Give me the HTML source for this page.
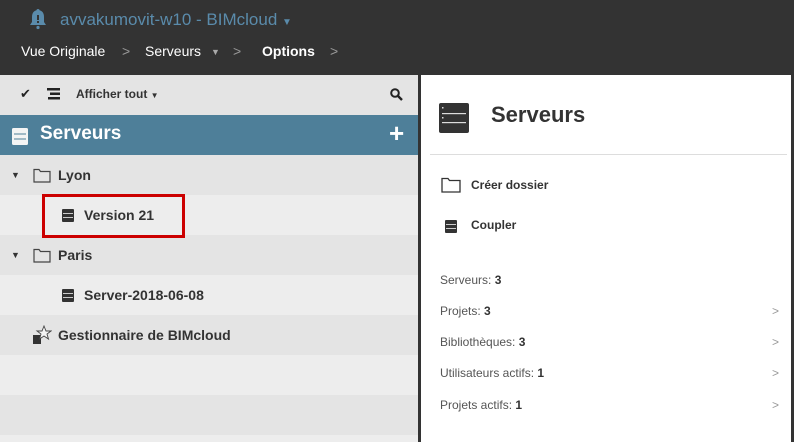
<!DOCTYPE html>
<html style="width:794px;height:442px;overflow:hidden"><head><meta charset="utf-8"><style>
*{margin:0;padding:0;box-sizing:border-box}
body{width:794px;height:442px;overflow:hidden;background:#333;font-family:"Liberation Sans",sans-serif;position:relative}
.a{position:absolute}
.top{left:0;top:0;width:794px;height:75px;background:#333}
.left{left:0;top:75px;width:418px;height:367px;background:#ececec;overflow:hidden}
.right{left:421px;top:75px;width:370px;height:367px;background:#fff}
.row{position:absolute;left:0;width:418px;height:40px;font-size:14px;font-weight:bold;color:#333;line-height:40px}
.sv{display:inline-block;width:12px;height:13px;background:#333;border-radius:1px;position:absolute;top:14px}
.sv:before,.sv:after{content:"";position:absolute;left:1px;right:1px;height:1px;background:#ccc}
.sv:before{top:4px}.sv:after{top:8px}
.stat{position:absolute;left:440px;font-size:12px;color:#555}
.stat b{color:#333}
.chev{position:absolute;left:772px;font-size:12px;color:#999}
.bc{position:absolute;top:43px;font-size:14px;color:#fff;white-space:nowrap}
.gt{position:absolute;top:43px;font-size:14px;color:#999}
</style></head><body>
<div class="a top"></div>
<svg class="a" style="left:28px;top:8px" width="20" height="22" viewBox="0 0 20 22"><path d="M10 1c1 0 1.5.6 1.5 1.3C14.5 3 16 5.5 16 9v5l2 3H2l2-3V9c0-3.5 1.5-6 4.5-6.7C8.5 1.6 9 1 10 1z" fill="#5a8bab"/><rect x="9" y="7" width="2" height="5" fill="#333"/><rect x="9" y="13" width="2" height="2" fill="#333"/><circle cx="10" cy="19.5" r="1.6" fill="#5a8bab"/></svg>
<div class="a" style="left:60px;top:10px;font-size:17px;color:#5a8bab">avvakumovit-w10 - BIMcloud <span style="font-size:10px">▼</span></div>
<div class="bc" style="left:21px">Vue Originale</div>
<div class="gt" style="left:122px">&gt;</div>
<div class="bc" style="left:145px">Serveurs</div>
<div class="a" style="left:211px;top:47px;font-size:9px;color:#aaa">▼</div>
<div class="gt" style="left:233px">&gt;</div>
<div class="bc" style="left:262px;font-weight:bold">Options</div>
<div class="gt" style="left:330px">&gt;</div>
<div class="a left"></div>
<div class="a" style="left:0;top:75px;width:418px;height:40px;background:#e4e4e4"></div>
<div class="a" style="left:20px;top:86px;font-size:13px;color:#222">✔</div>
<svg class="a" style="left:47px;top:88px" width="13" height="12"><rect x="0" y="0" width="13" height="2.5" fill="#222"/><rect x="3" y="4.5" width="10" height="2.5" fill="#222"/><rect x="1" y="9" width="12" height="2.5" fill="#222"/></svg>
<div class="a" style="left:76px;top:87px;font-size:12px;font-weight:bold;color:#333">Afficher tout <span style="font-size:8px">▼</span></div>
<svg class="a" style="left:390px;top:88px" width="13" height="13"><circle cx="5" cy="5" r="3.8" fill="none" stroke="#222" stroke-width="2"/><path d="M8 8l4 4" stroke="#222" stroke-width="2.4"/></svg>
<div class="a" style="left:0;top:115px;width:418px;height:40px;background:#4e7f99"></div>
<svg class="a" style="left:12px;top:128px" width="16" height="17"><rect width="16" height="17" rx="1.5" fill="#f4f4f4"/><rect x="2" y="5.5" width="12" height="1" fill="#4e7f99"/><rect x="2" y="10.5" width="12" height="1" fill="#4e7f99"/></svg>
<div class="a" style="left:40px;top:123px;font-size:19px;font-weight:bold;color:#fff">Serveurs</div>
<div class="a" style="left:389px;top:118px;font-size:26px;font-weight:bold;color:#fff">+</div>
<div class="row" style="top:155px;background:#e4e4e4"><span style="position:absolute;left:11px;font-size:9px">▼</span><svg style="position:absolute;left:33px;top:13px" width="18" height="15"><path d="M1 1.5h5l1.5 2H17v10.5H1z" fill="none" stroke="#444" stroke-width="1.2"/></svg><span style="position:absolute;left:58px">Lyon</span></div>
<div class="row" style="top:195px;background:#ededed"><span class="sv" style="left:62px"></span><span style="position:absolute;left:84px">Version 21</span></div>
<div class="row" style="top:235px;background:#e4e4e4"><span style="position:absolute;left:11px;font-size:9px">▼</span><svg style="position:absolute;left:33px;top:13px" width="18" height="15"><path d="M1 1.5h5l1.5 2H17v10.5H1z" fill="none" stroke="#444" stroke-width="1.2"/></svg><span style="position:absolute;left:58px">Paris</span></div>
<div class="row" style="top:275px;background:#ededed"><span class="sv" style="left:62px"></span><span style="position:absolute;left:84px">Server-2018-06-08</span></div>
<div class="row" style="top:315px;background:#e4e4e4"><svg style="position:absolute;left:32px;top:10px" width="20" height="20"><path d="M1 10h8v9H1z" fill="#333"/><path d="M12 1l2 5h5l-4 3 1.5 5-4.5-3-4.5 3 1.5-5-4-3h5z" fill="#f4f4f4" stroke="#444" stroke-width="0.9"/></svg><span style="position:absolute;left:58px">Gestionnaire de BIMcloud</span></div>
<div class="row" style="top:355px;background:#ededed"></div>
<div class="row" style="top:395px;height:40px;background:#e4e4e4"></div>
<div class="row" style="top:435px;height:7px;background:#ededed"></div>
<div class="a" style="left:42px;top:194px;width:143px;height:44px;border:3px solid #c00"></div>
<div class="a right"></div>
<svg class="a" style="left:439px;top:103px" width="30" height="30"><rect width="30" height="30" rx="2" fill="#333"/><rect x="3" y="10" width="24" height="1.2" fill="#ddd"/><rect x="3" y="19" width="24" height="1.2" fill="#ddd"/><rect x="3" y="4" width="1.5" height="1.5" fill="#ddd"/><rect x="3" y="14" width="1.5" height="1.5" fill="#ddd"/></svg>
<div class="a" style="left:491px;top:102px;font-size:22px;font-weight:bold;color:#333">Serveurs</div>
<div class="a" style="left:430px;top:154px;width:357px;height:1px;background:#ddd"></div>
<svg class="a" style="left:441px;top:177px" width="20" height="16"><path d="M1 1.5h6l1.5 2H19v11.5H1z" fill="none" stroke="#333" stroke-width="1.3"/></svg>
<div class="a" style="left:471px;top:178px;font-size:12px;font-weight:bold;color:#333">Créer dossier</div>
<span class="a sv" style="left:445px;top:220px"></span>
<div class="a" style="left:471px;top:218px;font-size:12px;font-weight:bold;color:#333">Coupler</div>
<div class="stat" style="top:273px">Serveurs: <b>3</b></div>
<div class="stat" style="top:304px">Projets: <b>3</b></div><div class="chev" style="top:304px">&gt;</div>
<div class="stat" style="top:335px">Bibliothèques: <b>3</b></div><div class="chev" style="top:335px">&gt;</div>
<div class="stat" style="top:366px">Utilisateurs actifs: <b>1</b></div><div class="chev" style="top:366px">&gt;</div>
<div class="stat" style="top:398px">Projets actifs: <b>1</b></div><div class="chev" style="top:398px">&gt;</div>
</body></html>
